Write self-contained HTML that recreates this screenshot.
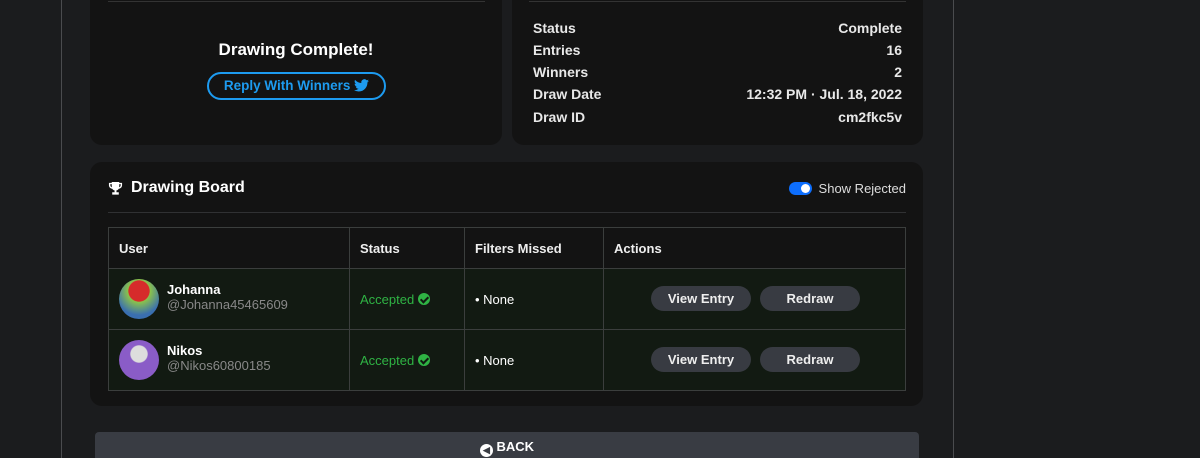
<!DOCTYPE html>
<html style="overflow:hidden;width:1200px;height:458px"><head><style>
*{margin:0;padding:0;box-sizing:border-box}
body{width:1200px;height:458px;background:#1b1c1e;font-family:"Liberation Sans",sans-serif;color:#fff;position:relative;overflow:hidden}
.vl{position:absolute;top:0;width:1px;height:458px;background:#4a4b4e}
.card{position:absolute;background:#131313;border-radius:12px}
.hr{position:absolute;height:1px;background:#303133}
.b{font-weight:bold}
.kv{position:absolute;left:21px;right:21px;font-size:14px;font-weight:bold;color:#e8e8e8;display:flex;justify-content:space-between}
table{position:absolute;left:18px;top:65px;width:798px;border-collapse:collapse;font-size:13px}
td,th{border:1px solid #3b3e3d;text-align:left;padding:0 10px}
th{height:41px;font-weight:bold;color:#eee}
td{height:61px;background:#121a12}
.btn{position:absolute;top:17px;width:100px;height:25px;line-height:25px;border-radius:13px;background:#383b42;text-align:center;font-weight:bold;font-size:13px;color:#eee}
.av{width:40px;height:40px;border-radius:50%;display:inline-block;vertical-align:middle;margin-right:8px}
.acc{color:#2fb344}
.chk{display:inline-block;width:12px;height:12px;border-radius:50%;background:#2fb344;vertical-align:-1px;position:relative}
.chk:after{content:"";position:absolute;left:4px;top:2px;width:3px;height:6px;border:solid #121a12;border-width:0 2px 2px 0;transform:rotate(45deg)}
</style></head><body>
<div class="vl" style="left:61px"></div>
<div class="vl" style="left:953px"></div>

<div class="card" style="left:90px;top:-20px;width:412px;height:165px">
  <div class="hr" style="left:18px;right:17px;top:21px;background:#333"></div>
  <div class="b" style="position:absolute;top:60px;width:100%;text-align:center;font-size:17px">Drawing Complete!</div>
  <div style="position:absolute;left:117px;top:92px;width:179px;height:28px;border:2px solid #1d9bf0;border-radius:14px;color:#1d9bf0;font-weight:bold;font-size:13.5px;line-height:24px;text-align:center">Reply With Winners <svg width="15" height="13" viewBox="0 0 24 20" style="vertical-align:-2px"><path fill="#1d9bf0" d="M24 2.4a10 10 0 0 1-2.8.8A5 5 0 0 0 23.3.4a10 10 0 0 1-3.1 1.2A4.9 4.9 0 0 0 11.8 6 14 14 0 0 1 1.7.9a4.9 4.9 0 0 0 1.5 6.6 4.9 4.9 0 0 1-2.2-.6 4.900 4.9 0 0 0 3.9 4.8 4.9 4.9 0 0 1-2.2.1 4.9 4.9 0 0 0 4.6 3.4A9.9 9.9 0 0 1 0 17.3 14 14 0 0 0 7.5 19.5c9.1 0 14-7.5 14-14v-.6A10 10 0 0 0 24 2.4z"/></svg></div>
</div>

<div class="card" style="left:512px;top:-20px;width:411px;height:165px">
  <div class="hr" style="left:17px;right:17px;top:21px;background:#333"></div>
  <div class="kv" style="top:40px"><span>Status</span><span>Complete</span></div>
  <div class="kv" style="top:62px"><span>Entries</span><span>16</span></div>
  <div class="kv" style="top:84px"><span>Winners</span><span>2</span></div>
  <div class="kv" style="top:106px"><span>Draw Date</span><span>12:32 PM · Jul. 18, 2022</span></div>
  <div class="kv" style="top:129px"><span>Draw ID</span><span>cm2fkc5v</span></div>
</div>

<div class="card" style="left:90px;top:162px;width:833px;height:244px">
  <div style="position:absolute;left:18px;top:17px;font-size:16px;font-weight:bold;display:flex;align-items:center"><svg width="15" height="15" viewBox="0 0 16 16" style="margin-right:8px"><path fill="#fff" d="M4 1h8v1h3v2.5c0 2-1.5 3.5-3.5 3.7-.6 1-1.5 1.6-2.5 1.8V12h2.5v2.5h-7V12H7V10C6 9.8 5.1 9.2 4.5 8.2 2.5 8 1 6.5 1 4.5V2h3zM2.5 3.3v1.2c0 1 .7 1.9 1.6 2.2C4 6 4 5 4 3.3zm11 0H12c0 1.7 0 2.7-.1 3.4.9-.3 1.6-1.2 1.6-2.2z"/></svg>Drawing Board</div>
  <div style="position:absolute;right:17px;top:19px;font-size:13px;color:#ddd;display:flex;align-items:center"><span style="width:23px;height:13px;background:#0d6efd;border-radius:7px;position:relative;margin-right:7px"><span style="position:absolute;right:2px;top:2px;width:9px;height:9px;border-radius:50%;background:#fff"></span></span>Show Rejected</div>
  <div class="hr" style="left:18px;right:17px;top:50px"></div>
  <table>
    <tr><th style="width:241px">User</th><th style="width:115px">Status</th><th style="width:139px">Filters Missed</th><th>Actions</th></tr>
    <tr><td><span class="av" style="background:radial-gradient(circle at 50% 30%,#d62b2b 30%,#8bc34a 32%,#3a6fb0 70%)"></span><span style="display:inline-block;vertical-align:middle;line-height:15px;margin-top:-4px"><b style="font-size:13px">Johanna</b><br><span style="color:#888">@Johanna45465609</span></span></td><td class="acc">Accepted <span class="chk"></span></td><td>• None</td><td style="position:relative"><span class="btn" style="left:47px">View Entry</span><span class="btn" style="left:156px">Redraw</span></td></tr>
    <tr><td><span class="av" style="background:radial-gradient(circle at 50% 35%,#ddd 25%,#8a5cc7 28%)"></span><span style="display:inline-block;vertical-align:middle;line-height:15px;margin-top:-4px"><b style="font-size:13px">Nikos</b><br><span style="color:#888">@Nikos60800185</span></span></td><td class="acc">Accepted <span class="chk"></span></td><td>• None</td><td style="position:relative"><span class="btn" style="left:47px">View Entry</span><span class="btn" style="left:156px">Redraw</span></td></tr>
  </table>
</div>

<div style="position:absolute;left:95px;top:432px;width:824px;height:26px;background:#393c43;border-radius:4px 4px 0 0;text-align:center;font-weight:bold;font-size:13px;line-height:30px"><span style="display:inline-block;width:13px;height:13px;border-radius:50%;background:#fff;color:#393c43;font-size:9px;line-height:13px;vertical-align:-2px">◀</span> BACK</div>
</body></html>
